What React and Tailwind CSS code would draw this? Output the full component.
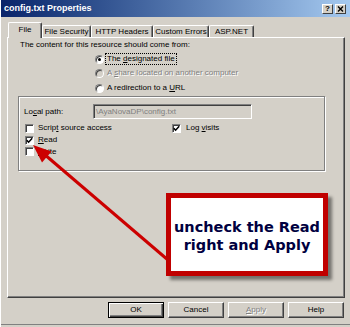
import React from "react";

function Check({ checked }) {
  return (
    <span className="flex h-[9px] w-[9px] shrink-0 items-center justify-center border border-t-[#808080] border-l-[#808080] border-b-white border-r-white bg-white shadow-[inset_1px_1px_0_#404040]">
      {checked && (
        <svg width="7" height="7" viewBox="0 0 7 7">
          <path d="M0.8 3.2 L2.6 5.2 L6.2 1.2" stroke="#000" strokeWidth="1.5" fill="none" />
        </svg>
      )}
    </span>
  );
}

function Radio({ checked, disabled }) {
  return (
    <span
      className={
        "flex h-[9px] w-[9px] shrink-0 items-center justify-center rounded-full border border-t-[#808080] border-l-[#808080] border-b-white border-r-white shadow-[inset_1px_1px_0_#404040] " +
        (disabled ? "bg-[#d4d0c8]" : "bg-white")
      }
    >
      {checked && <span className="h-[3px] w-[3px] rounded-full bg-black" />}
    </span>
  );
}

function Btn({ children, def }) {
  return (
    <div
      className={
        "flex h-[16px] w-[56px] items-center justify-center border " +
        (def
          ? "border-black shadow-[inset_1px_1px_0_#fff,inset_-1px_-1px_0_#404040,inset_-2px_-2px_0_#808080]"
          : "border-t-white border-l-white border-r-[#404040] border-b-[#404040] shadow-[inset_-1px_-1px_0_#808080]")
      }
    >
      {children}
    </div>
  );
}

function Tab({ w, children }) {
  return (
    <div
      className="flex h-[12px] items-center justify-center rounded-t-[2px] border-t border-l border-r border-t-white border-l-white border-r-[#404040] shadow-[inset_-1px_0_0_#808080]"
      style={{ width: w }}
    >
      {children}
    </div>
  );
}

export default function App() {
  return (
    <div className="relative h-[327px] w-[350px] overflow-hidden border-l border-white bg-[#d4d0c8] font-['Liberation_Sans',Arial,sans-serif] text-[8px] leading-none text-black">
      {/* title bar */}
      <div className="flex h-[17px] items-center justify-between bg-linear-to-r from-[#0a246a] to-[#a6caf0] pl-[3px] pr-[4px]">
        <span className="text-[9px] font-bold text-white">config.txt Properties</span>
        <div className="flex gap-[2px]">
          <div className="flex h-[10px] w-[11px] items-center justify-center border border-t-white border-l-white border-r-[#404040] border-b-[#404040] bg-[#d4d0c8] text-[8px] font-bold">
            ?
          </div>
          <div className="flex h-[10px] w-[11px] items-center justify-center border border-t-white border-l-white border-r-[#404040] border-b-[#404040] bg-[#d4d0c8]">
            <svg width="7" height="6" viewBox="0 0 7 6">
              <path d="M1 0.5 L6 5.5 M6 0.5 L1 5.5" stroke="#000" strokeWidth="1.4" />
            </svg>
          </div>
        </div>
      </div>

      {/* tabs */}
      <div className="relative z-10 mt-[5px] flex h-[15px] items-end pl-[7px]">
        <div className="-mb-px flex h-[16px] w-[34px] items-start justify-center rounded-t-[2px] border-t border-l border-r border-t-white border-l-white border-r-[#404040] bg-[#d4d0c8] pt-[3px] shadow-[inset_-1px_0_0_#808080]">
          File
        </div>
        <Tab w={49}>File Security</Tab>
        <Tab w={62}>HTTP Headers</Tab>
        <Tab w={56}>Custom Errors</Tab>
        <Tab w={45}>ASP.NET</Tab>
      </div>

      {/* panel */}
      <div className="ml-[6px] h-[261px] w-[338px] border border-t-white border-l-white border-r-[#404040] border-b-[#404040] shadow-[inset_-1px_-1px_0_#808080]">
        <div className="flex h-[14px] items-center pl-[12px]">The content for this resource should come from:</div>
        <div className="flex h-[14px] items-center gap-[1px] pl-[87px]">
          <Radio checked />
          <span className="border border-dotted border-black px-px py-[1px]">
            The <u>d</u>esignated file
          </span>
        </div>
        <div className="flex h-[14px] items-center gap-[3px] pl-[87px]">
          <Radio disabled />
          <span className="text-[#808080] [text-shadow:1px_1px_0_#fff]">
            A <u>s</u>hare located on another computer
          </span>
        </div>
        <div className="flex h-[16px] items-center gap-[3px] pl-[87px]">
          <Radio />
          <span>
            A redirection to a <u>U</u>RL
          </span>
        </div>

        {/* group box */}
        <div className="ml-[10px] h-[75px] w-[307px] border border-[#808080] shadow-[inset_1px_1px_0_#fff,1px_1px_0_#fff]">
          <div className="mt-[7px] flex h-[15px] items-center pl-[5px]">
            <span className="w-[69px]">
              Lo<u>c</u>al path:
            </span>
            <div className="flex h-[15px] w-[159px] items-center border border-t-[#808080] border-l-[#808080] border-b-white border-r-white bg-[#d4d0c8] pl-[2px] text-[#808080] shadow-[inset_1px_1px_0_#404040]">
              {"\\AyaNovaDP\\config.txt"}
            </div>
          </div>
          <div className="mt-[3px] flex h-[12px] items-center pl-[6px]">
            <div className="flex w-[147px] items-center gap-[4px]">
              <Check />
              <span>
                Scrip<u>t</u> source access
              </span>
            </div>
            <div className="flex items-center gap-[5px]">
              <Check checked />
              <span>
                Log <u>v</u>isits
              </span>
            </div>
          </div>
          <div className="flex h-[12px] items-center gap-[4px] pl-[6px]">
            <Check checked />
            <span>
              <u>R</u>ead
            </span>
          </div>
          <div className="flex h-[11px] items-center gap-[4px] pl-[6px]">
            <Check />
            <span>
              <u>W</u>rite
            </span>
          </div>
        </div>
      </div>

      {/* buttons */}
      <div className="mt-[4px] flex h-[16px] justify-end gap-[4px] pr-[6px]">
        <Btn def>OK</Btn>
        <Btn>Cancel</Btn>
        <Btn>
          <span className="text-[#808080] [text-shadow:1px_1px_0_#fff]">
            <u>A</u>pply
          </span>
        </Btn>
        <Btn>Help</Btn>
      </div>
      <div className="mt-[6px] h-px bg-[#808080]" />

      {/* arrow annotation */}
      <svg className="pointer-events-none absolute left-[-1px] top-0" width="350" height="327" viewBox="0 0 350 327">
        <line x1="168" y1="260" x2="44" y2="154" stroke="#cc0000" strokeWidth="3" />
        <polygon points="33,145 42,162.5 51.5,151.5" fill="#cc0000" />
      </svg>

      {/* callout */}
      <div className="absolute left-[165px] top-[193px] flex h-[83px] w-[162px] flex-col items-center justify-center border-[5px] border-[#c00000] bg-white pt-[2px] text-center font-['DejaVu_Sans',Verdana,sans-serif] text-[14.5px] font-bold leading-[18px] text-[#000040] shadow-[4px_4px_3px_rgba(0,0,0,0.45)]">
        <div>uncheck the Read</div>
        <div>right and Apply</div>
      </div>
    </div>
  );
}
